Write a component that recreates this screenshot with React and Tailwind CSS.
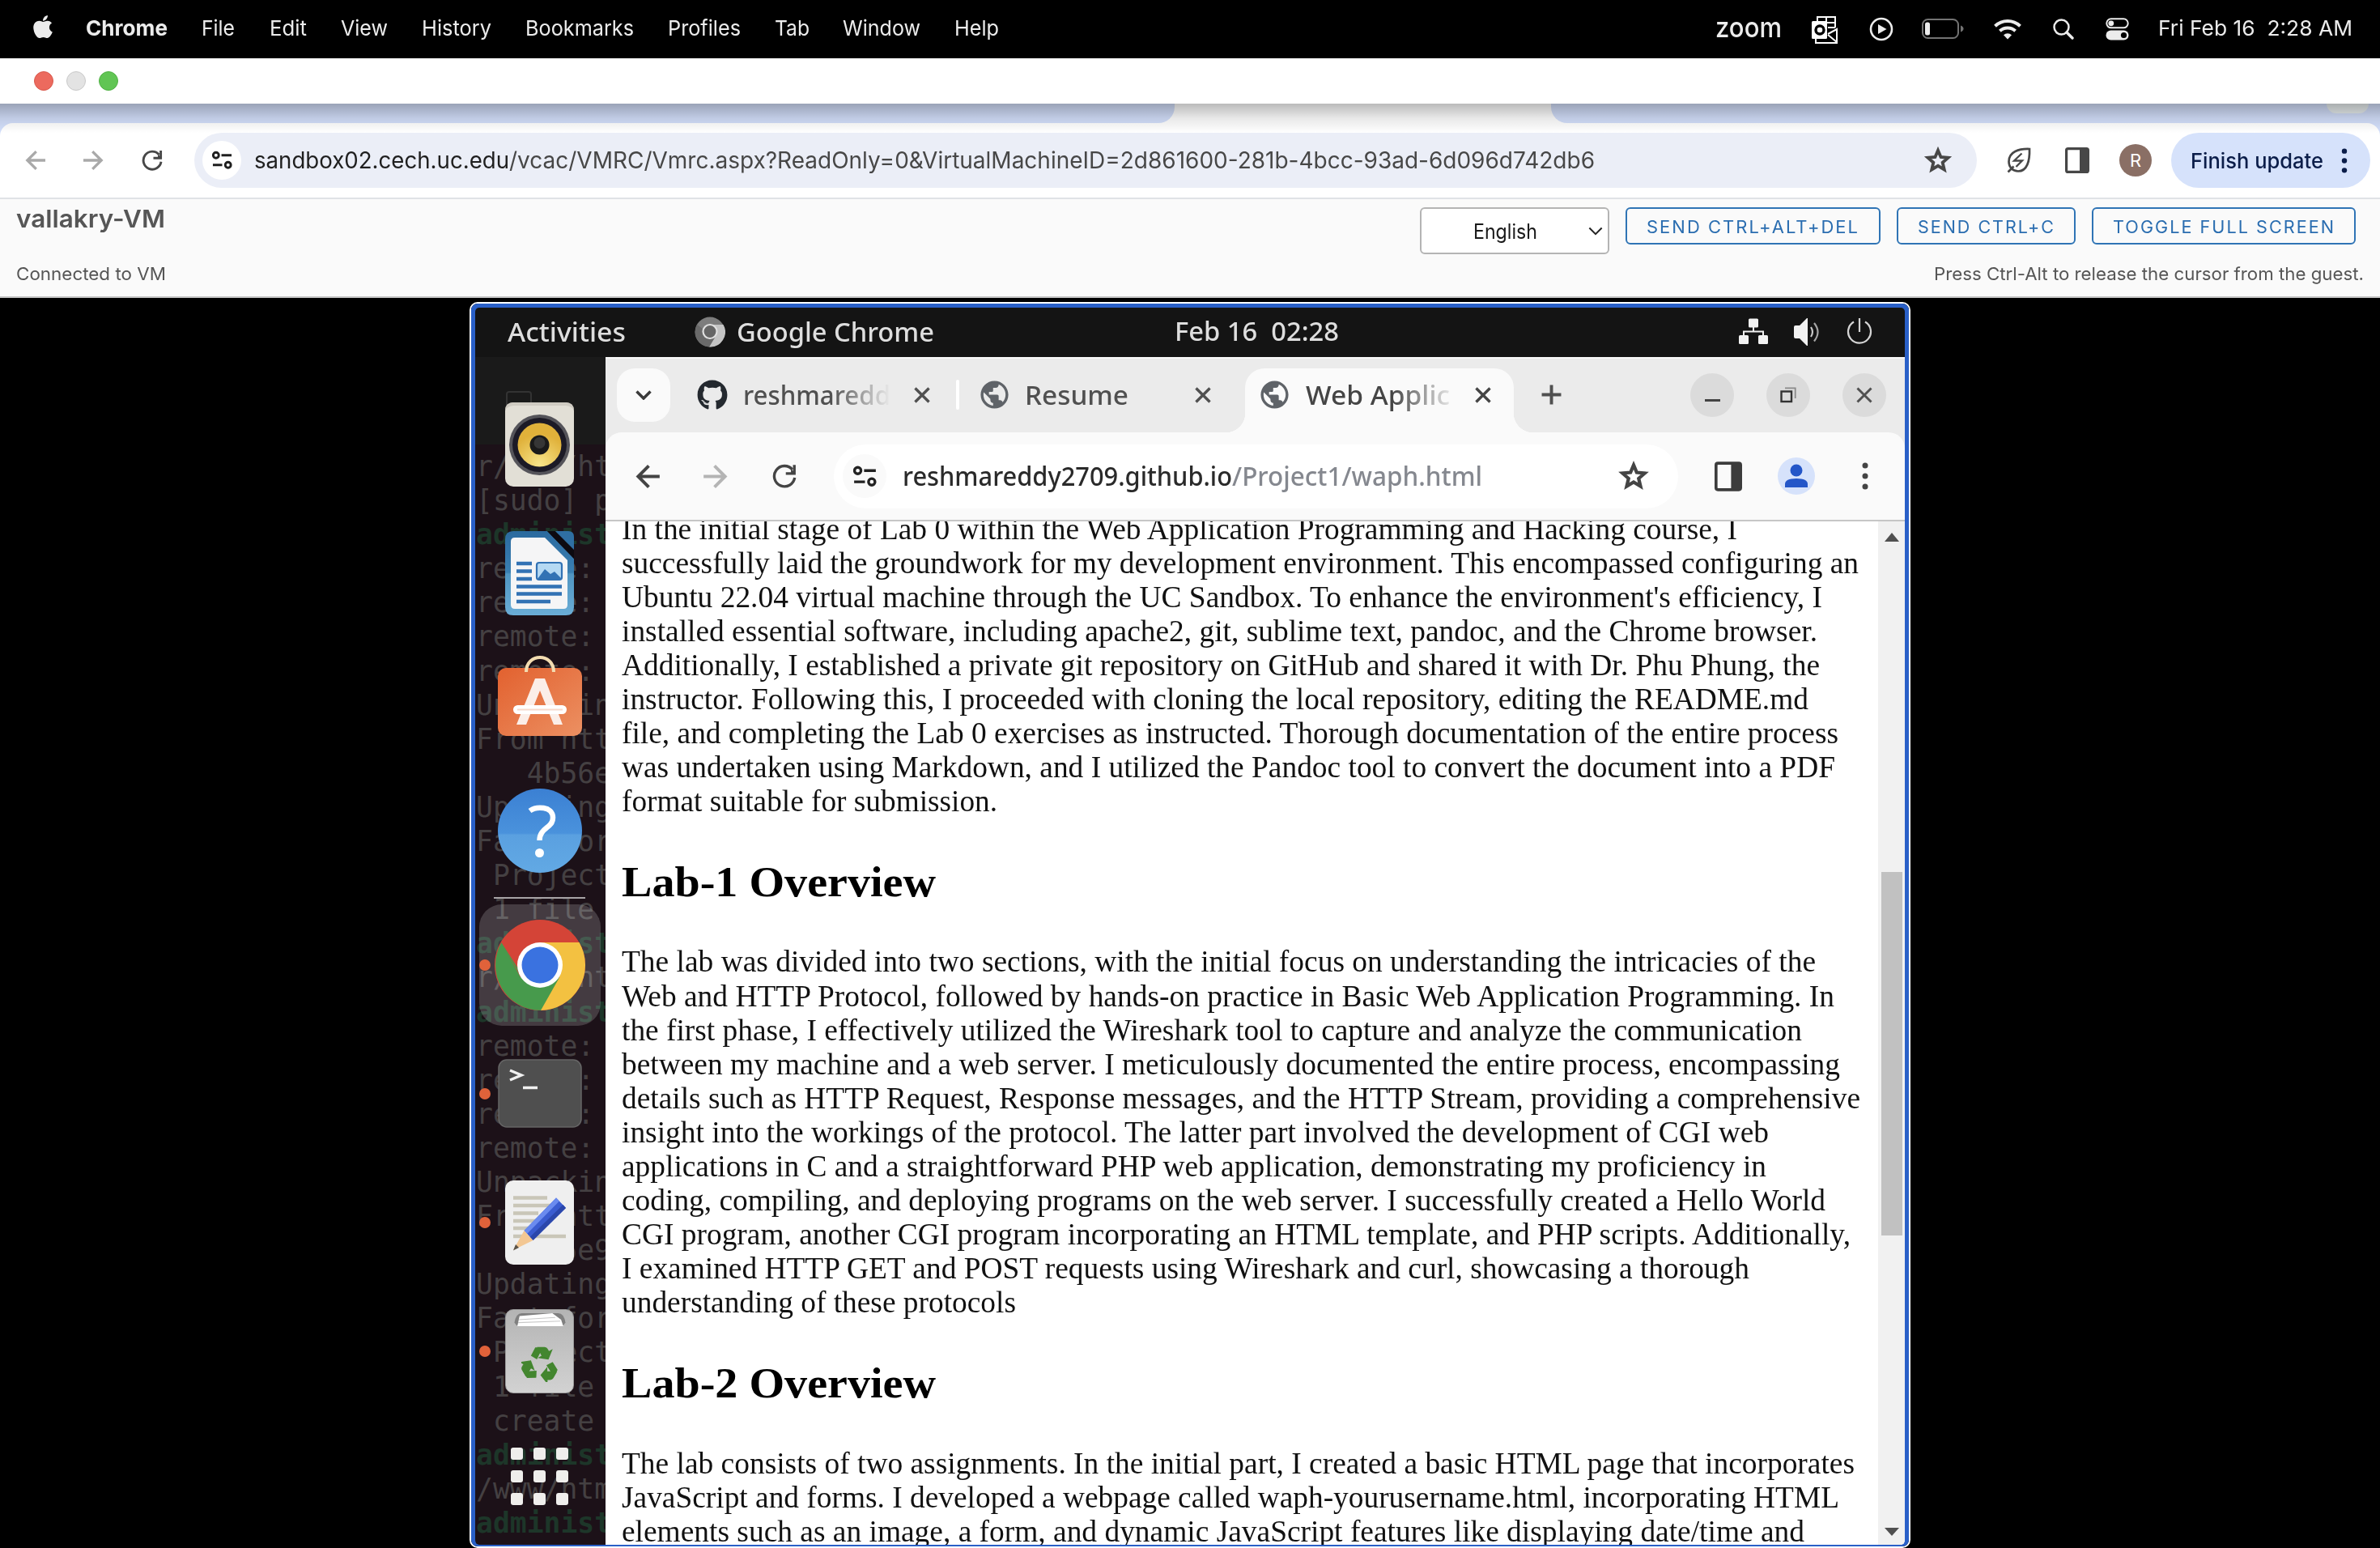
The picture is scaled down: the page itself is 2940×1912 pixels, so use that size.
import React, { useLayoutEffect, useRef } from "react";
import { FaApple, FaGithub } from "react-icons/fa";
import { MdPublic } from "react-icons/md";

/* One line of text stretched to the width of its box. */
function Fit({ children, className = "" }) {
  const box = useRef(null);
  const line = useRef(null);
  useLayoutEffect(() => {
    const fit = () => {
      line.current.style.transform = "none";
      const natural = line.current.getBoundingClientRect().width;
      const wanted = box.current.getBoundingClientRect().width;
      if (natural > 0) line.current.style.transform = `scaleX(${wanted / natural})`;
    };
    fit();
    document.fonts?.ready.then(fit);
  }, []);
  return (
    <div ref={box} className={`shrink-0 whitespace-pre ${className}`}>
      <span ref={line} className="inline-block origin-left">{children}</span>
    </div>
  );
}

/* ---------- shared line icons on a 24 unit grid ---------- */

function Line({ className, d, weight = 2.2 }) {
  return (
    <svg viewBox="0 0 24 24" className={`shrink-0 ${className}`} fill="none" stroke="currentColor" strokeWidth={weight}>
      <path d={d} />
    </svg>
  );
}

const ArrowBack = (props) => <Line d="M20 12H5.500M12.500 4.700L5.200 12l7.300 7.300" {...props} />;
const ArrowForward = (props) => <Line d="M4 12h14.500M11.500 4.700l7.300 7.300-7.300 7.300" {...props} />;
const Cross = (props) => <Line d="M5.600 5.600l12.800 12.800M18.400 5.600L5.600 18.400" weight={2.500} {...props} />;
const Plus = (props) => <Line d="M12 5v14M5 12h14" weight={2.300} {...props} />;
const Star = (props) => (
  <Line d="M12 4.600l2.100 5 5.400.5-4.100 3.550 1.250 5.250L12 16.100l-4.650 2.800 1.250-5.250L4.500 10.100l5.400-.5z" weight={2.300} {...props} />
);

/* ---------- macOS menu bar ---------- */

const MENUS = [
  ["File", "ml-[42px] w-[41px]"],
  ["Edit", "ml-[43px] w-[46px]"],
  ["View", "ml-[42px] w-[58px]"],
  ["History", "ml-[42px] w-[86px]"],
  ["Bookmarks", "ml-[42px] w-[134px]"],
  ["Profiles", "ml-[42px] w-[90px]"],
  ["Tab", "ml-[42px] w-[43px]"],
  ["Window", "ml-[41px] w-[96px]"],
  ["Help", "ml-[42px] w-[55px]"],
];

function MenuBar() {
  return (
    <div className="flex h-[72px] shrink-0 items-center bg-black pb-[3px] text-[26px] leading-[34px] text-[#ececec]">
      <FaApple className="ml-[37px] mb-[3px] size-[32px] shrink-0" />
      <Fit className="ml-[37px] w-[101px] font-bold">Chrome</Fit>
      {MENUS.map(([name, cls]) => (
        <Fit key={name} className={cls}>{name}</Fit>
      ))}
      <div className="flex-1" />
      <Fit className="w-[82px] pb-[3px] text-[35px] font-medium">zoom</Fit>
      <svg viewBox="0 0 32 34" className="ml-[37px] mt-[4px] h-[34px] w-[32px]" fill="none" stroke="#fff" strokeWidth="2">
        <path d="M7 7V1h22v13M18 1v13M29 8H18M29 14h-9M5 28v5h26V16l-11 6M20 23l11 9" />
        <rect x="0" y="6" width="19" height="22" rx="1.5" fill="#fff" stroke="none" />
        <circle cx="10" cy="17" r="5" stroke="#000" strokeWidth="3.4" />
      </svg>
      <svg viewBox="0 0 30 30" className="ml-[39px] mt-[3px] size-[30px]">
        <circle cx="15" cy="15" r="13" fill="none" stroke="#ececec" strokeWidth="2.6" />
        <path d="M11 9l10.5 6L11 21z" fill="#ececec" />
      </svg>
      <svg viewBox="0 0 52 26" className="ml-[35px] mt-[3px] h-[26px] w-[52px]">
        <rect x="1" y="1" width="44" height="23" rx="6.5" fill="none" stroke="#737373" strokeWidth="2" />
        <rect x="4" y="4.500" width="6" height="16" rx="2.500" fill="#ececec" />
        <path d="M48 8.500q3.500 1.500 3.500 4t-3.500 4z" fill="#737373" />
      </svg>
      <svg viewBox="0 0 34 26" className="ml-[37px] mt-[2px] h-[26px] w-[34px]" fill="none" stroke="#ececec">
        <path d="M1.500 9.200a22.500 22.500 0 0 1 31 0" strokeWidth="4" />
        <path d="M7.400 15.200a14 14 0 0 1 19.200 0" strokeWidth="4" />
        <path d="M12 20.200a7.500 7.500 0 0 1 10 0l-5 5.300z" fill="#ececec" stroke="none" />
      </svg>
      <svg viewBox="0 0 26 26" className="ml-[39px] mt-[3px] size-[26px]" fill="none" stroke="#ececec">
        <circle cx="10.500" cy="10.500" r="9" strokeWidth="2.500" />
        <path d="M17 17l7 7" strokeWidth="3.400" strokeLinecap="round" />
      </svg>
      <svg viewBox="0 0 30 28" className="ml-[39px] mt-[2px] h-[28px] w-[30px]">
        <rect x="1.300" y="1.300" width="26.400" height="11" rx="5.500" fill="none" stroke="#ececec" strokeWidth="2" />
        <circle cx="6.800" cy="6.800" r="3.400" fill="#ececec" />
        <rect x="0.500" y="15.500" width="28" height="12" rx="6" fill="#ececec" />
        <circle cx="22.500" cy="21.500" r="3.600" fill="#000" />
      </svg>
      <Fit className="ml-[35px] mr-[34px] w-[240px]">Fri Feb 16  2:28 AM</Fit>
    </div>
  );
}

/* ---------- outer browser chrome ---------- */

function Reload({ className }) {
  return (
    <svg viewBox="0 0 26 26" className={className} fill="none" stroke="currentColor" strokeWidth="2.900">
      <path d="M24 14.800A11 11 0 1 1 21.500 6" />
      <path d="M23.600 1v9.300H14.500" />
      <path d="M20 5l4 4.500h-4z" fill="currentColor" stroke="none" />
    </svg>
  );
}

function Tune({ className }) {
  return (
    <svg viewBox="0 0 26 24" className={className} fill="none" stroke="currentColor" strokeWidth="3">
      <circle cx="5" cy="5.500" r="3.600" />
      <path d="M12 5.500h13M1 18h12" />
      <circle cx="20.500" cy="18" r="3.600" />
    </svg>
  );
}

function SidePanel({ className }) {
  return (
    <svg viewBox="0 0 30 32" className={className}>
      <rect x="1.600" y="1.600" width="26.800" height="28.800" rx="2" fill="none" stroke="currentColor" strokeWidth="3.200" />
      <path d="M18 1h10v30H18z" fill="currentColor" />
    </svg>
  );
}

function Dots({ className }) {
  return (
    <svg viewBox="0 0 8 34" className={className} fill="currentColor">
      <circle cx="4" cy="4" r="3.500" />
      <circle cx="4" cy="17" r="3.500" />
      <circle cx="4" cy="30" r="3.500" />
    </svg>
  );
}

function OuterChrome() {
  return (
    <>
      <div className="flex h-[56px] shrink-0 items-center gap-[16px] bg-white pl-[42px]">
        <div className="size-[24px] rounded-full border border-[#d8584c] bg-[#ec6a5e]" />
        <div className="size-[24px] rounded-full border border-[#c9c9c9] bg-[#e3e3e3]" />
        <div className="size-[24px] rounded-full border border-[#4fb143] bg-[#61c554]" />
      </div>
      <div className="relative shrink-0 bg-[#d3dffb]">
        <div className="flex h-[24px] justify-between bg-white">
          <div className="w-[1451px] rounded-br-[20px] bg-[#d3dffb]" />
          <div className="flex w-[1024px] justify-end rounded-bl-[20px] bg-[#d3dffb] pr-[14px]">
            <div className="h-[12px] w-[52px] rounded-b-[18px] bg-[#e9eff0]" />
          </div>
        </div>
        <div className="flex h-[92px] items-center rounded-t-[16px] bg-white">
          <ArrowBack className="ml-[26px] size-[36px] text-[#a9a9a9]" />
          <ArrowForward className="ml-[35px] size-[36px] text-[#a9a9a9]" />
          <Reload className="ml-[42px] size-[26px] text-[#474747]" />
          <div className="ml-[39px] flex h-[68px] w-[2202px] items-center rounded-full bg-[#ebeef7]">
            <div className="ml-[10px] flex size-[48px] items-center justify-center rounded-full bg-white text-[#1f1f1f]">
              <Tune className="h-[24px] w-[25px]" />
            </div>
            <Fit className="ml-[16px] w-[315px] text-[28px] leading-[36px] text-[#1f1f1f]">sandbox02.cech.uc.edu</Fit>
            <Fit className="w-[1341px] text-[28px] leading-[36px] text-[#474747]">/vcac/VMRC/Vmrc.aspx?ReadOnly=0&amp;VirtualMachineID=2d861600-281b-4bcc-93ad-6d096d742db6</Fit>
            <Star className="ml-auto mr-[28px] size-[40px] text-[#474747]" />
          </div>
          <svg viewBox="0 0 30 32" className="ml-[37px] h-[32px] w-[30px]" fill="none" stroke="#474747" strokeWidth="2.700">
            <path d="M28 2C15 1.500 2.500 5.500 2.500 17.500c0 7 5 12 11.500 12C25 29.500 28.500 17 28 2z" />
            <path d="M1.500 30.500l7-7" />
            <path d="M18.500 7.500L9 16.500h10l-7.500 7.500" strokeWidth="2.300" />
          </svg>
          <SidePanel className="ml-[42px] h-[32px] w-[30px] text-[#474747]" />
          <div className="ml-[37px] flex size-[40px] items-center justify-center rounded-full bg-[#8a6f65] text-[22px] text-white">R</div>
          <div className="ml-[24px] flex h-[68px] w-[246px] items-center rounded-full bg-[#d6e2fb] text-[#0b1d49]">
            <Fit className="ml-[24px] w-[164px] pt-[1px] text-[26px] leading-[32px] font-medium">Finish update</Fit>
            <Dots className="ml-[22px] h-[31px] w-[8px]" />
          </div>
        </div>
        <div className="pointer-events-none absolute inset-x-0 top-0 h-[36px] bg-linear-to-b from-black/27 via-black/9 to-transparent" />
      </div>
    </>
  );
}

/* ---------- remote console header ---------- */

function ConsoleButton({ label, box, text }) {
  return (
    <div className={`flex h-[46px] items-center justify-center rounded-[6px] border-2 border-[#2f74b5] pt-[2px] ${box}`}>
      <Fit className={`text-[21.500px] leading-[28px] tracking-[2px] text-[#2a6db0] ${text}`}>{label}</Fit>
    </div>
  );
}

function ConsoleHeader() {
  return (
    <div className="flex h-[124px] shrink-0 justify-between border-y-2 border-t-[#e0e2e6] border-b-[#c4c4c4] bg-[#fafafa] text-[#565656]">
      <div className="pl-[20px] pt-[6px]">
        <Fit className="w-[184px] text-[30px] leading-[36px] font-semibold">vallakry-VM</Fit>
        <Fit className="mt-[36px] w-[185px] text-[22px] leading-[28px]">Connected to VM</Fit>
      </div>
      <div className="flex flex-col pt-[10px]">
        <div className="flex h-[58px] items-start pr-[30px]">
          <div className="flex h-[58px] w-[234px] items-center rounded-[6px] border-2 border-[#b4b4b4] bg-white text-[#1a1a1a]">
            <Fit className="ml-[64px] w-[79px] pt-px text-[25px] leading-[30px]">English</Fit>
            <svg viewBox="0 0 20 12" className="ml-[63px] h-[11px] w-[18px]" fill="none" stroke="#222" strokeWidth="2.200">
              <path d="M1.500 1.500L10 10l8.500-8.500" />
            </svg>
          </div>
          <ConsoleButton label="SEND CTRL+ALT+DEL" box="ml-[20px] w-[315px]" text="w-[263px]" />
          <ConsoleButton label="SEND CTRL+C" box="ml-[20px] w-[221px]" text="w-[170px]" />
          <ConsoleButton label="TOGGLE FULL SCREEN" box="ml-[20px] w-[326px]" text="w-[275px]" />
        </div>
        <Fit className="mt-[10px] mr-[20px] w-[531px] self-end text-[22px] leading-[28px]">Press Ctrl-Alt to release the cursor from the guest.</Fit>
      </div>
    </div>
  );
}

/* ---------- guest desktop: top bar ---------- */

function UbuntuBar() {
  return (
    <div className="flex h-[61px] shrink-0 items-center bg-[#141414] pb-[2px] font-['Noto_Sans'] text-[32px] leading-[44px] font-medium text-[#dedede]">
      <Fit className="ml-[40px] w-[146px]">Activities</Fit>
      <svg viewBox="0 0 38 38" className="ml-[85px] size-[38px]">
        <circle cx="19" cy="19" r="18.500" fill="#7d7d7d" />
        <path d="M19 10h16.500A18.500 18.500 0 0 1 18 37.500l8.500-14z" fill="#c4c4c4" />
        <path d="M3 10A18.500 18.500 0 0 0 18 37.500l7-12z" fill="#6a6a6a" />
        <circle cx="19" cy="18.500" r="8.500" fill="#666" stroke="#e0e0e0" strokeWidth="2.200" />
      </svg>
      <Fit className="ml-[14px] w-[244px]">Google Chrome</Fit>
      <Fit className="ml-[297px] w-[203px] pb-[2px]">Feb 16  02:28</Fit>
      <svg viewBox="0 0 36 32" className="mb-[2px] ml-[494px] h-[32px] w-[36px]">
        <path d="M18 8v9M6 24v-7.500h24V24" fill="none" stroke="#f2f2f2" strokeWidth="2" />
        <rect x="12" y="0.500" width="12" height="11" rx="1.500" fill="#f2f2f2" />
        <rect x="0" y="21" width="12" height="11" rx="1.500" fill="#f2f2f2" />
        <rect x="24" y="21" width="12" height="11" rx="1.500" fill="#f2f2f2" />
      </svg>
      <svg viewBox="0 0 34 34" className="ml-[32px] size-[34px]">
        <path d="M0 11q0-2 2-2h5l9-9h1v34h-1l-9-9H2q-2 0-2-2z" fill="#f2f2f2" />
        <path d="M21 11q4 6 0 12" fill="none" stroke="#c9c9c9" strokeWidth="2.200" />
        <path d="M25 6q9 11 0 22.500" fill="none" stroke="#a5a5a5" strokeWidth="2.200" />
      </svg>
      <svg viewBox="0 0 32 34" className="mb-[2px] ml-[31px] h-[34px] w-[32px]" fill="none" stroke="#d4d4d4" strokeWidth="2.200">
        <path d="M16 1v17M9 5.500a14 14 0 1 0 14 0" />
      </svg>
    </div>
  );
}

/* ---------- guest desktop: dock ---------- */

const TERMINAL = [
  ["r/www/ht"],
  ["[sudo] p"],
  ["administ", 1],
  ["remote:"],
  ["remote:"],
  ["remote:"],
  ["remote:"],
  ["Unpackin"],
  ["From htt"],
  ["   4b56e"],
  ["Updating"],
  ["Fast-for"],
  [" Project"],
  [" 1 file"],
  ["administ", 1],
  ["r/www/ht"],
  ["administ", 1],
  ["remote:"],
  ["remote:"],
  ["remote:"],
  ["remote:"],
  ["Unpackin"],
  ["From htt"],
  ["   4b5e9"],
  ["Updating"],
  ["Fast-for"],
  [" Project"],
  [" 1 file"],
  [" create"],
  ["administ", 1],
  ["/www/htm"],
  ["administ", 1],
];

function Running() {
  return <div className="absolute left-[5px] top-1/2 size-[14px] -translate-y-1/2 rounded-full bg-[#e0623a]" />;
}

function Slot({ className, running, children }) {
  return (
    <div className={`relative flex w-full shrink-0 justify-center pr-[2px] ${className}`}>
      {running && <Running />}
      {children}
    </div>
  );
}

function SpeakerIcon() {
  return (
    <svg viewBox="0 0 85 104" className="h-[104px] w-[85px]">
      <defs>
        <radialGradient id="cone" cx="0.5" cy="0.95" r="0.7">
          <stop offset="0" stopColor="#f8e58a" />
          <stop offset="1" stopColor="#e0b13a" />
        </radialGradient>
      </defs>
      <rect width="85" height="104" rx="10" fill="#e2dfd6" />
      <path d="M0 10Q0 0 10 0h65q10 0 10 10-2-5-10-6H10Q2 5 0 10z" fill="#cfcbc2" />
      <circle cx="42.500" cy="52.500" r="37.500" fill="#55545a" />
      <circle cx="42.500" cy="52.500" r="33.500" fill="#1c1a26" />
      <circle cx="42.500" cy="52.500" r="27" fill="url(#cone)" />
      <circle cx="42.500" cy="52.500" r="12" fill="#1a1a1a" />
      <circle cx="42.500" cy="50" r="7" fill="#363636" />
    </svg>
  );
}

function WriterIcon() {
  return (
    <svg viewBox="0 0 85 104" className="h-[104px] w-[85px]">
      <defs>
        <linearGradient id="frame" x1="0" y1="0" x2="0" y2="1">
          <stop offset="0" stopColor="#2b6a9e" />
          <stop offset="0.49" stopColor="#3a7fb2" />
          <stop offset="0.51" stopColor="#5095c2" />
          <stop offset="1" stopColor="#6aadd6" />
        </linearGradient>
      </defs>
      <path d="M10 0h42l33 34v60q0 10-10 10H10Q0 104 0 94V10Q0 0 10 0z" fill="url(#frame)" />
      <path d="M52 0h10l23 23v11z" fill="#0d0a10" />
      <path d="M62 0h16q7 0 7 7v16z" fill="#2f6fa3" />
      <path d="M12 8h37l28 28v55q0 5-5 5H12q-5 0-5-5V13q0-5 5-5z" fill="#f5f5f6" />
      <path d="M14 40h19M14 49.500h19M14 59h19M14 68.500h56M14 77.500h56M14 87h42" stroke="#3272b4" strokeWidth="4.500" />
      <rect x="39" y="39" width="31" height="21" rx="3" fill="#b5d9f3" stroke="#3272b4" strokeWidth="2.200" />
      <path d="M40 59l9-12 7 6 5-3 9 9z" fill="#3272b4" />
    </svg>
  );
}

function SoftwareIcon() {
  return (
    <svg viewBox="0 0 104 100" className="h-[100px] w-[104px]">
      <defs>
        <linearGradient id="bag" x1="0" y1="0" x2="1" y2="1">
          <stop offset="0" stopColor="#e2612f" />
          <stop offset="1" stopColor="#ec9062" />
        </linearGradient>
      </defs>
      <rect x="0" y="15" width="104" height="84" rx="10" fill="url(#bag)" />
      <path d="M35 20C35-4 69-4 69 20" fill="none" stroke="#f3dcb0" strokeWidth="4" />
      <path d="M46 28h12L80 85H69L52 43 35 85H23z" fill="#fbeee8" />
      <rect x="19" y="61" width="66" height="11" rx="5.500" fill="#fff" />
      <path d="M24 66.500h56" stroke="#f6d9cc" strokeWidth="2" />
    </svg>
  );
}

function HelpIcon() {
  return (
    <svg viewBox="0 0 104 104" className="size-[104px]">
      <defs>
        <linearGradient id="help" x1="0" y1="0" x2="0" y2="1">
          <stop offset="0" stopColor="#3b80d3" />
          <stop offset="0.53" stopColor="#4a92dc" />
          <stop offset="0.55" stopColor="#5aa0e0" />
          <stop offset="1" stopColor="#62a9e4" />
        </linearGradient>
      </defs>
      <circle cx="52" cy="52" r="52" fill="url(#help)" />
      <path d="M39.500 27.500C47 22 68 21 68 36c0 13-16.500 12-16.500 28" fill="none" stroke="#fff" strokeWidth="6.500" />
      <circle cx="51.500" cy="79.500" r="5.500" fill="#fff" />
    </svg>
  );
}

function ChromeIcon() {
  return (
    <svg viewBox="0 0 112 112" className="size-[112px]">
      <circle cx="56" cy="56" r="56" fill="#d44437" />
      <path d="M56 28h48.500A56 56 0 0 1 56 112l24.200-42z" fill="#f3c141" />
      <path d="M8.500 28A56 56 0 0 0 57 112l23.200-41L32 71z" fill="#479a4c" />
      <path d="M8 28.500L32.500 70l23.500-14z" fill="#479a4c" />
      <path d="M8 27.500L30 62l8-22 18-12h48A56 56 0 0 0 8 27.500z" fill="#d44437" />
      <circle cx="56" cy="56" r="28" fill="#fff" />
      <circle cx="56" cy="56" r="22.500" fill="#3a72e0" />
    </svg>
  );
}

function TerminalIcon() {
  return (
    <svg viewBox="0 0 104 85" className="h-[85px] w-[104px]">
      <rect x="1" y="1" width="102" height="83" rx="10" fill="#4f4f4f" stroke="#666" strokeWidth="1.500" />
      <path d="M15 14l14 6-14 6" fill="none" stroke="#f0f0f0" strokeWidth="3.500" />
      <path d="M31 35.500h18" stroke="#f0f0f0" strokeWidth="3.500" />
    </svg>
  );
}

function EditorIcon() {
  return (
    <svg viewBox="0 0 85 104" className="h-[104px] w-[85px]">
      <rect width="85" height="104" rx="10" fill="#efefef" />
      <path d="M10 21.500h42M10 31h50M10 40.500h31M10 50h36M10 59h20M10 69h65" stroke="#c9c6b8" strokeWidth="4.500" />
      <path d="M23.500 62L63 21.500 75 34 34.500 74z" fill="#3a5cd0" />
      <path d="M23.500 62L63 21.500l4 4L27 66z" fill="#6a8bef" />
      <path d="M30.500 70L71.500 30l3.500 4-40.500 40z" fill="#2b47ab" />
      <path d="M23.500 62l11 12L10 86z" fill="#f3c793" />
      <path d="M13 79l4 4-7 3.500z" fill="#5b5348" />
    </svg>
  );
}

/* One of the three bent arrows of the recycling mark, turned about its centre. */
function RecycleArrow({ turn }) {
  return (
    <g transform={`rotate(${turn} 22 24)`}>
      <path d="M12.500 12.500l4.500-8.500h7l-6 12z" />
      <path d="M20 3.500h7.500q2 0 3 2l1.800 3.200 3-1.700-3.800 9.500-9.500-1.500 3-1.800z" />
    </g>
  );
}

function TrashIcon() {
  return (
    <div className="flex h-[104px] w-[85px] flex-col items-center rounded-[10px] border border-[#9a9a9a] bg-linear-to-b from-[#b4b4b4] to-[#d2d2d2]">
      <svg viewBox="0 0 70 20" className="mt-[3px] h-[18px] w-[70px]">
        <path d="M0 14Q2 1 10 1h50q8 0 10 13l-3 4H3z" fill="#808080" />
        <path d="M7 5l45-4 12 9 3 9H4z" fill="#fff" />
        <path d="M6 10l50-3M5 14l58-2" stroke="#c8c8c8" strokeWidth="1.200" />
      </svg>
      <svg viewBox="0 0 44 44" className="mt-[22px] size-[46px]" fill="#43862f" stroke="#43862f" strokeWidth="1.800">
        <RecycleArrow turn={0} />
        <RecycleArrow turn={120} />
        <RecycleArrow turn={240} />
      </svg>
    </div>
  );
}

function Dock() {
  return (
    <div className="relative flex w-[161px] shrink-0 flex-col overflow-hidden bg-[#1c1118]">
      <div className="absolute inset-0">
        <div className="flex h-[108px] items-start bg-[#1a1a1a] pl-[38px] pt-[42px]">
          <div className="h-[34px] w-[32px] rounded-[4px] border-2 border-[#333]" />
        </div>
        <div className="pl-px pt-[6px] font-['DejaVu_Sans_Mono'] text-[34.700px] leading-[42.100px] text-[#444042]">
          {TERMINAL.map(([text, prompt], i) => (
            <div key={i} className={prompt ? "whitespace-pre font-bold text-[#1d3629]" : "whitespace-pre"}>{text}</div>
          ))}
        </div>
      </div>
      <Slot className="mt-[56px]"><SpeakerIcon /></Slot>
      <Slot className="mt-[55px]"><WriterIcon /></Slot>
      <Slot className="mt-[50px]"><SoftwareIcon /></Slot>
      <Slot className="mt-[64px]"><HelpIcon /></Slot>
      <div className="relative ml-[23px] mt-[30px] h-[2px] w-[113px] shrink-0 bg-[#a8a4a6]" />
      <div className="relative ml-[5px] mt-[7px] flex h-[150px] w-[150px] shrink-0 items-center justify-center rounded-[28px] bg-white/18">
        <div className="absolute left-0 size-[14px] rounded-full bg-[#e0623a]" />
        <ChromeIcon />
      </div>
      <Slot running className="mt-[41px]"><TerminalIcon /></Slot>
      <Slot running className="mt-[65px]"><EditorIcon /></Slot>
      <Slot running className="mt-[55px]"><TrashIcon /></Slot>
      <div className="relative ml-[44px] mt-[67px] grid w-[71px] shrink-0 grid-cols-3 gap-x-[13px] gap-y-[13px]">
        {Array.from({ length: 9 }, (_, i) => (
          <div key={i} className="size-[15px] rounded-[3px] bg-[#efeeec]" />
        ))}
      </div>
    </div>
  );
}

/* ---------- guest browser ---------- */

function InnerTabs() {
  return (
    <div className="flex h-[93px] shrink-0 items-center border-t-2 border-[#f8f8f8] bg-[#ebebeb] pb-[2px] font-['Noto_Sans'] text-[32px] leading-[44px] font-medium text-[#505050]">
      <div className="ml-[14px] flex size-[66px] items-center justify-center rounded-[22px] bg-[#fafafa]">
        <svg viewBox="0 0 20 12" className="h-[12px] w-[20px]" fill="none" stroke="#3a3a3a" strokeWidth="3.500">
          <path d="M1.500 1.500L10 10l8.500-8.500" />
        </svg>
      </div>
      <FaGithub className="ml-[33px] size-[38px] text-[#24292f]" />
      <div className="ml-[19px] w-[182px] shrink-0 overflow-hidden [mask-image:linear-gradient(to_right,black_60%,transparent)]">
        <Fit className="w-[182px]">reshmaredd</Fit>
      </div>
      <Cross className="ml-[23px] size-[32px]" />
      <div className="ml-[26px] h-[37px] w-[4px] rounded-full bg-white" />
      <MdPublic className="ml-[23px] size-[41px] text-[#5f6368]" />
      <Fit className="ml-[17px] w-[128px]">Resume</Fit>
      <Cross className="ml-[76px] size-[32px]" />
      <div className="relative -mb-[2px] ml-[36px] flex h-[79px] w-[332px] items-center self-end rounded-t-[24px] bg-[#fafafa] pb-[14px] text-[#454545]">
        <div className="absolute bottom-0 -left-[24px] size-[24px] bg-[radial-gradient(circle_at_top_left,transparent_24px,#fafafa_24.500px)]" />
        <div className="absolute bottom-0 -right-[24px] size-[24px] bg-[radial-gradient(circle_at_top_right,transparent_24px,#fafafa_24.500px)]" />
        <MdPublic className="ml-[16px] size-[41px] text-[#5f6368]" />
        <div className="ml-[18px] [mask-image:linear-gradient(to_right,black_60%,rgba(0,0,0,0.12))]">
          <Fit className="w-[178px]">Web Applic</Fit>
        </div>
        <Cross className="ml-[25px] size-[32px]" />
      </div>
      <Plus className="ml-[26px] size-[41px]" />
      <div className="ml-[151px] flex gap-[40px]">
        <div className="flex size-[54px] items-center justify-center rounded-full bg-[#dbdbdb]">
          <div className="mt-[13px] h-[3px] w-[19px] bg-[#444]" />
        </div>
        <div className="flex size-[54px] items-center justify-center rounded-full bg-[#dbdbdb]">
          <svg viewBox="0 0 20 20" className="size-[20px]" fill="none" stroke="#333" strokeWidth="2.400">
            <rect x="1.500" y="5.500" width="12.500" height="12.500" />
            <path d="M6 1.300h12.700V14" stroke="#8a8a8a" strokeWidth="1.800" />
          </svg>
        </div>
        <div className="flex size-[54px] items-center justify-center rounded-full bg-[#dbdbdb]">
          <Cross className="size-[32px]" weight={2.200} />
        </div>
      </div>
    </div>
  );
}

function InnerToolbar() {
  return (
    <div className="shrink-0 bg-[#ebebeb]">
      <div className="flex h-[110px] items-center rounded-t-[20px] border-b-2 border-[#c6c6c6] bg-[#fafafa] text-[#444]">
        <ArrowBack className="ml-[31px] size-[43px]" />
        <ArrowForward className="ml-[40px] size-[43px] text-[#b4b4b4]" />
        <Reload className="ml-[49px] size-[30px]" />
        <div className="ml-[46px] flex h-[79px] w-[1043px] items-center rounded-full bg-white font-['Noto_Sans'] text-[32px] leading-[44px] font-medium">
          <div className="ml-[11px] flex size-[54px] items-center justify-center rounded-full bg-[#fafafa] text-[#222]">
            <Tune className="h-[27px] w-[29px]" />
          </div>
          <Fit className="ml-[20px] w-[407px] pb-px text-[#2a2a2a]">reshmareddy2709.github.io</Fit>
          <Fit className="w-[309px] pb-px text-[#85888f]">/Project1/waph.html</Fit>
          <Star className="ml-auto mr-[33px] size-[44px]" />
        </div>
        <SidePanel className="ml-[45px] h-[39px] w-[34px] text-[#3c3c3c]" />
        <svg viewBox="0 0 46 46" className="ml-[44px] size-[46px]">
          <circle cx="23" cy="23" r="23" fill="#d6e2fb" />
          <circle cx="23" cy="16" r="7.500" fill="#2456c8" />
          <path d="M9 37v-4q0-7 14-7t14 7v4z" fill="#2456c8" />
        </svg>
        <Dots className="ml-[58px] h-[34px] w-[8px]" />
      </div>
    </div>
  );
}

const LAB0 = [
  ["In the initial stage of Lab 0 within the Web Application Programming and Hacking course, I", "w-[1378px]"],
  ["successfully laid the groundwork for my development environment. This encompassed configuring an", "w-[1528px]"],
  ["Ubuntu 22.04 virtual machine through the UC Sandbox. To enhance the environment's efficiency, I", "w-[1483px]"],
  ["installed essential software, including apache2, git, sublime text, pandoc, and the Chrome browser.", "w-[1477px]"],
  ["Additionally, I established a private git repository on GitHub and shared it with Dr. Phu Phung, the", "w-[1480px]"],
  ["instructor. Following this, I proceeded with cloning the local repository, editing the README.md", "w-[1466px]"],
  ["file, and completing the Lab 0 exercises as instructed. Thorough documentation of the entire process", "w-[1503px]"],
  ["was undertaken using Markdown, and I utilized the Pandoc tool to convert the document into a PDF", "w-[1499px]"],
  ["format suitable for submission.", "w-[464px]"],
];

const LAB1 = [
  ["The lab was divided into two sections, with the initial focus on understanding the intricacies of the", "w-[1475px]"],
  ["Web and HTTP Protocol, followed by hands-on practice in Basic Web Application Programming. In", "w-[1498px]"],
  ["the first phase, I effectively utilized the Wireshark tool to capture and analyze the communication", "w-[1458px]"],
  ["between my machine and a web server. I meticulously documented the entire process, encompassing", "w-[1505px]"],
  ["details such as HTTP Request, Response messages, and the HTTP Stream, providing a comprehensive", "w-[1530px]"],
  ["insight into the workings of the protocol. The latter part involved the development of CGI web", "w-[1417px]"],
  ["applications in C and a straightforward PHP web application, demonstrating my proficiency in", "w-[1414px]"],
  ["coding, compiling, and deploying programs on the web server. I successfully created a Hello World", "w-[1487px]"],
  ["CGI program, another CGI program incorporating an HTML template, and PHP scripts. Additionally,", "w-[1518px]"],
  ["I examined HTTP GET and POST requests using Wireshark and curl, showcasing a thorough", "w-[1393px]"],
  ["understanding of these protocols", "w-[487px]"],
];

const LAB2 = [
  ["The lab consists of two assignments. In the initial part, I created a basic HTML page that incorporates", "w-[1523px]"],
  ["JavaScript and forms. I developed a webpage called waph-yourusername.html, incorporating HTML", "w-[1504px]"],
  ["elements such as an image, a form, and dynamic JavaScript features like displaying date/time and", "w-[1461px]"],
];

function Paragraph({ lines }) {
  return (
    <div>
      {lines.map(([text, width]) => (
        <Fit key={text} className={width}>{text}</Fit>
      ))}
    </div>
  );
}

function Heading({ children }) {
  return (
    <h2 className="mt-[46.600px] mb-[45.500px] text-[52px] leading-[64px] font-bold text-black">
      <Fit className="w-[388px]">{children}</Fit>
    </h2>
  );
}

function InnerPage() {
  return (
    <div className="flex min-h-0 flex-1 bg-white">
      <div className="min-w-0 flex-1 overflow-hidden pl-[19.500px] font-['Liberation_Serif'] text-[37px] leading-[42.100px] text-[#111]">
        <div className="-mt-[11.500px]">
          <Paragraph lines={LAB0} />
          <Heading>Lab-1 Overview</Heading>
          <Paragraph lines={LAB1} />
          <Heading>Lab-2 Overview</Heading>
          <Paragraph lines={LAB2} />
        </div>
      </div>
      <div className="flex w-[33px] shrink-0 flex-col items-center bg-[#f1f1f1]">
        <svg viewBox="0 0 18 11" className="mt-[14px] h-[11px] w-[18px]"><path d="M9 0l9 11H0z" fill="#505050" /></svg>
        <div className="mt-[408px] h-[449px] w-[26px] bg-[#c1c1c1]" />
        <svg viewBox="0 0 18 10" className="mt-auto mb-[11px] h-[10px] w-[18px]"><path d="M9 10L0 0h18z" fill="#505050" /></svg>
      </div>
    </div>
  );
}

function GuestDesktop() {
  return (
    <div className="flex min-h-0 flex-1 justify-center bg-black pt-[5px]">
      <div className="flex w-[1780px] rounded-[10px] border-2 border-white">
        <div className="flex min-w-0 flex-1 flex-col overflow-hidden rounded-[8px] border-[5px] border-b-2 border-[#2a60c8] bg-[#2a60c8]">
          <div className="flex min-h-0 flex-1 flex-col overflow-hidden rounded-[5px]">
            <UbuntuBar />
            <div className="flex min-h-0 flex-1">
              <Dock />
              <div className="flex min-w-0 flex-1 flex-col">
                <InnerTabs />
                <InnerToolbar />
                <InnerPage />
              </div>
            </div>
          </div>
        </div>
      </div>
    </div>
  );
}

export default function App() {
  return (
    <div className="flex h-[1912px] w-[2940px] flex-col overflow-hidden bg-black font-['Inter',sans-serif]">
      <MenuBar />
      <OuterChrome />
      <ConsoleHeader />
      <GuestDesktop />
    </div>
  );
}
